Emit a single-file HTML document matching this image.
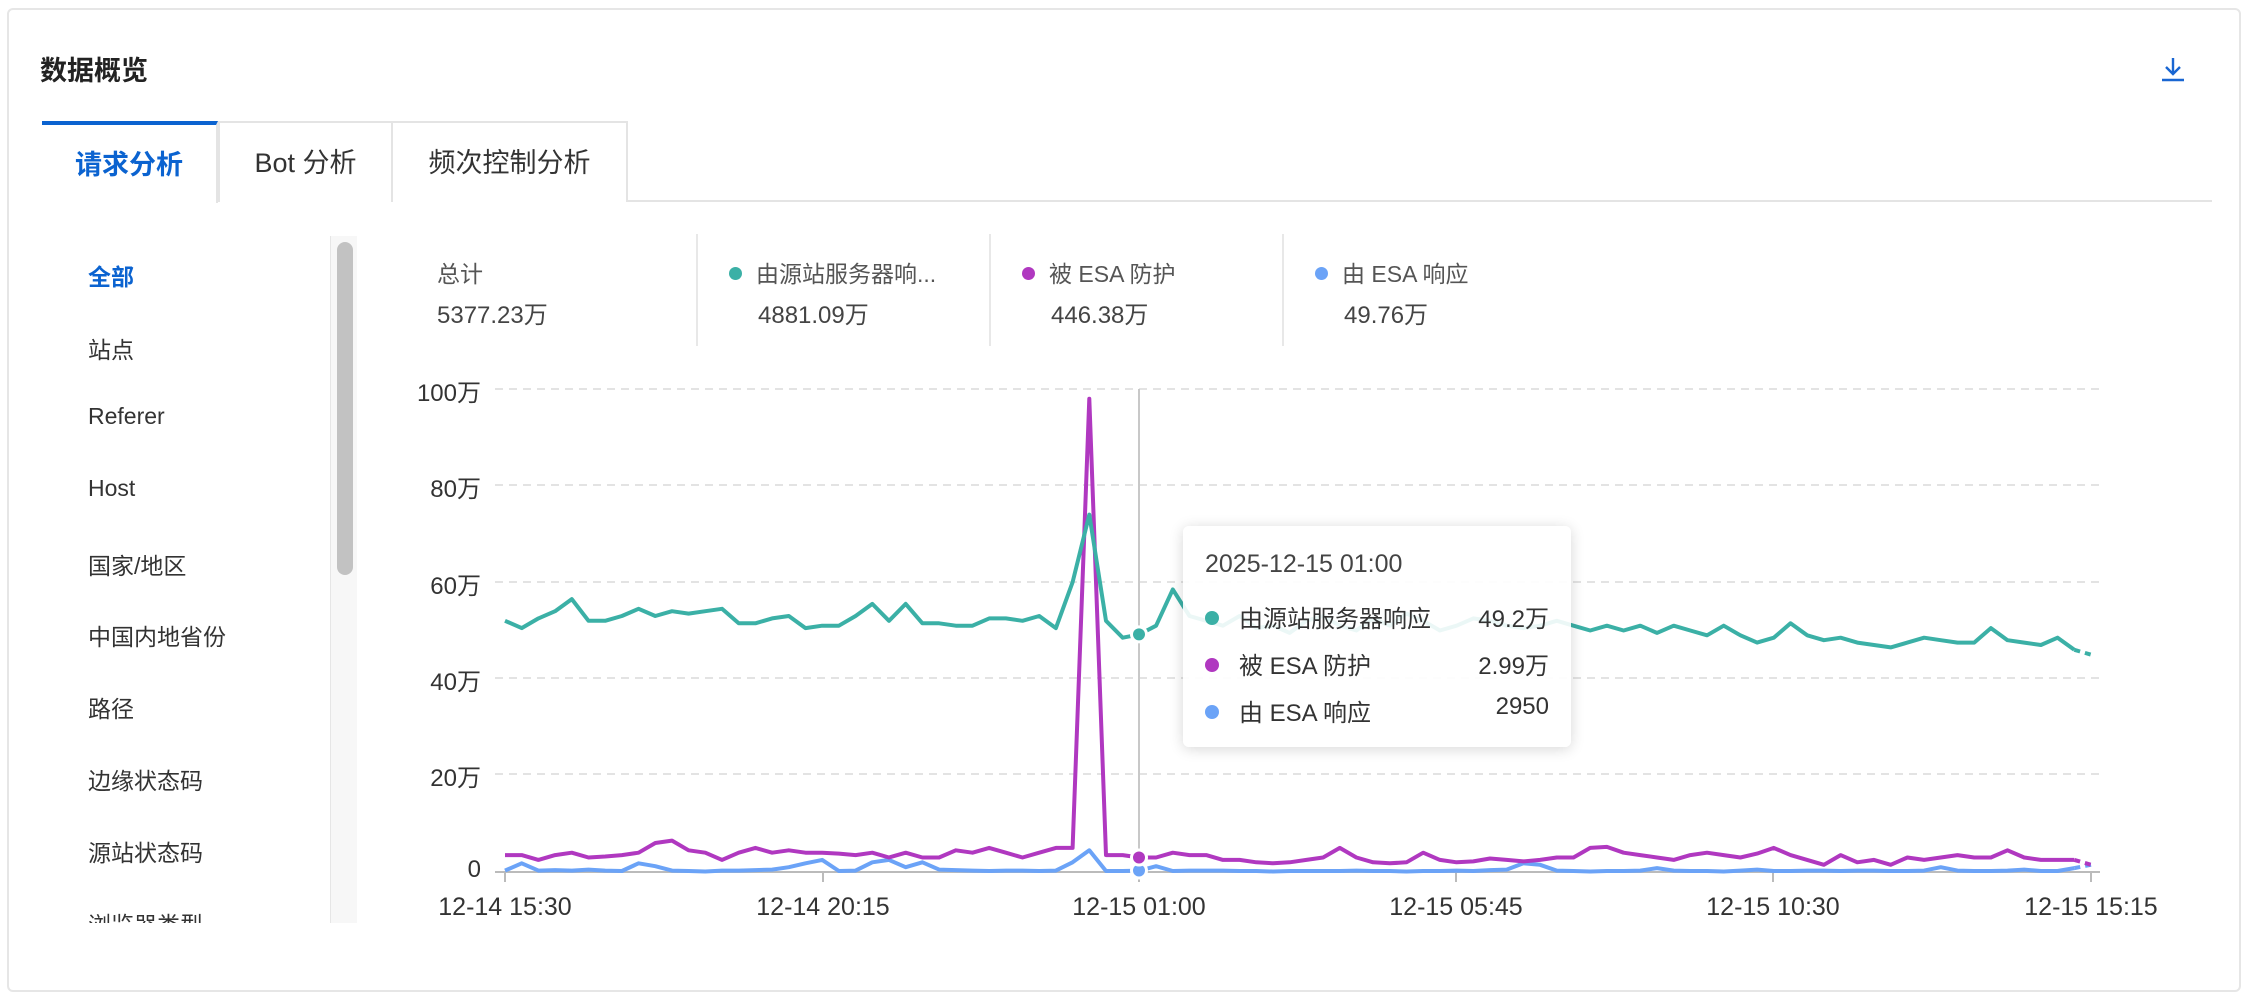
<!DOCTYPE html>
<html><head><meta charset="utf-8">
<style>
*{margin:0;padding:0;box-sizing:border-box}
body{width:2252px;height:1002px;background:#fff;font-family:"Liberation Sans","Noto Sans CJK SC",sans-serif;position:relative;overflow:hidden;color:#333}
.card{position:absolute;left:7px;top:8px;width:2234px;height:984px;border:2px solid #e6e6e6;border-radius:6px}
.abs{position:absolute;white-space:nowrap}
.title{left:40px;top:49px;font-size:27px;font-weight:bold;color:#222}
.tabline{position:absolute;left:42px;top:200px;width:2170px;height:2px;background:#e4e4e4}
.tab{position:absolute;top:121px;height:81px;border:2px solid #e4e4e4;border-bottom:none;background:#fff;font-size:27px;color:#333;display:flex;align-items:center;justify-content:center;padding-bottom:4px}
.tab.act{border-top:4px solid #0b63d0;border-left:none;color:#0b63d0;font-weight:bold;height:82px}
.menu{left:88px;font-size:23px;color:#333}
.lbl{font-size:23px;color:#555}
.val{font-size:24px;color:#444}
.sep{position:absolute;top:234px;width:2px;height:112px;background:#e8e8e8}
.dot{display:inline-block;width:13px;height:13px;border-radius:50%;margin-right:14px;vertical-align:2px}
.yl{font-size:24px;color:#333;text-align:right;width:100px;left:381px}
.xl{font-size:25px;color:#333;width:200px;text-align:center}
.tip{position:absolute;left:1183px;top:526px;width:388px;height:221px;background:rgba(255,255,255,0.9);border-radius:6px;box-shadow:0 2px 14px rgba(0,0,0,0.16)}
.tip .r{position:absolute;left:22px;font-size:24px;color:#333;width:344px}
.tip .r span.v{position:absolute;right:0}
</style></head><body>
<div class="card"></div>
<div class="abs title">数据概览</div>
<svg class="abs" style="left:2160px;top:56px" width="26" height="26" viewBox="0 0 26 26"><path d="M13 2v16M6 11l7 7 7-7M2 24h22" stroke="#1966d2" stroke-width="2.4" fill="none"/></svg>
<div class="tabline"></div>
<div class="tab act" style="left:42px;width:176px">请求分析</div>
<div class="tab" style="left:218px;width:175px">Bot 分析</div>
<div class="tab" style="left:391px;width:237px">频次控制分析</div>

<div class="abs menu" style="top:258px;color:#0b63d0;font-weight:bold">全部</div>
<div class="abs menu" style="top:331px">站点</div>
<div class="abs menu" style="top:403px">Referer</div>
<div class="abs menu" style="top:475px">Host</div>
<div class="abs menu" style="top:547px">国家/地区</div>
<div class="abs menu" style="top:618px">中国内地省份</div>
<div class="abs menu" style="top:690px">路径</div>
<div class="abs menu" style="top:762px">边缘状态码</div>
<div class="abs menu" style="top:834px">源站状态码</div>
<div style="position:absolute;left:88px;top:906px;height:17px;overflow:hidden;font-size:23px;color:#333">浏览器类型</div>
<div style="position:absolute;left:330px;top:236px;width:27px;height:687px;background:#f7f7f7;border-left:1px solid #e6e6e6"></div>
<div style="position:absolute;left:337px;top:242px;width:16px;height:333px;background:#c2c2c2;border-radius:8px"></div>

<div class="abs lbl" style="left:437px;top:255px">总计</div>
<div class="abs val" style="left:437px;top:295px">5377.23万</div>
<div class="sep" style="left:696px"></div>
<div class="abs lbl" style="left:729px;top:255px"><span class="dot" style="background:#3bb0a6"></span>由源站服务器响...</div>
<div class="abs val" style="left:758px;top:295px">4881.09万</div>
<div class="sep" style="left:989px"></div>
<div class="abs lbl" style="left:1022px;top:255px"><span class="dot" style="background:#b038c0"></span>被 ESA 防护</div>
<div class="abs val" style="left:1051px;top:295px">446.38万</div>
<div class="sep" style="left:1282px"></div>
<div class="abs lbl" style="left:1315px;top:255px"><span class="dot" style="background:#6ba3f7"></span>由 ESA 响应</div>
<div class="abs val" style="left:1344px;top:295px">49.76万</div>

<div class="abs yl" style="top:373px">100万</div>
<div class="abs yl" style="top:469px">80万</div>
<div class="abs yl" style="top:566px">60万</div>
<div class="abs yl" style="top:662px">40万</div>
<div class="abs yl" style="top:758px">20万</div>
<div class="abs yl" style="top:856px">0</div>
<div class="abs xl" style="left:405px;top:893px">12-14 15:30</div>
<div class="abs xl" style="left:723px;top:893px">12-14 20:15</div>
<div class="abs xl" style="left:1039px;top:893px">12-15 01:00</div>
<div class="abs xl" style="left:1356px;top:893px">12-15 05:45</div>
<div class="abs xl" style="left:1673px;top:893px">12-15 10:30</div>
<div class="abs xl" style="left:1991px;top:893px">12-15 15:15</div>

<svg id="ch" class="abs" style="left:0;top:0" width="2252" height="1002"></svg>

<div class="tip">
<div class="r" style="top:24px;color:#444;font-size:25px">2025-12-15 01:00</div>
<div class="r" style="top:73px"><span class="dot" style="background:#3bb0a6;width:14px;height:14px;margin-right:20px"></span>由源站服务器响应<span class="v">49.2万</span></div>
<div class="r" style="top:120px"><span class="dot" style="background:#b038c0;width:14px;height:14px;margin-right:20px"></span>被 ESA 防护<span class="v">2.99万</span></div>
<div class="r" style="top:167px"><span class="dot" style="background:#6ba3f7;width:14px;height:14px;margin-right:20px"></span>由 ESA 响应<span class="v">2950</span></div>
</div>

<script>
var g=[52,50.5,52.5,54,56.5,52,52,53,54.5,53,54,53.5,54,54.5,51.5,51.5,52.5,53,50.5,51,51,53,55.5,52,55.5,51.5,51.5,51,51,52.5,52.5,52,53,50.5,60,74,52,48.5,49.2,51,58.5,53,52,51,53,50.5,51,49.5,52,53,51,50,52.5,51,53.5,52,50,51,52.5,52,51,50.5,51,52,51,50,51,50,51,49.5,51,50,49,51,49,47.5,48.5,51.5,49,48,48.5,47.5,47,46.5,47.5,48.5,48,47.5,47.5,50.5,48,47.5,47,48.5,46,45,39.5];
var p=[3.5,3.5,2.5,3.5,4,3,3.2,3.5,4,6,6.5,4.5,4,2.5,4,5,4,4.5,4,4,3.8,3.5,4,3,4,3,3,4.5,4,5,4,3,4,5,5,98,3.5,3.5,3,3,4,3.5,3.5,2.5,2.5,2,1.8,2,2.5,3,5,3,2,1.8,2,4,2.5,2,2.2,2.8,2.5,2.2,2.5,3,3,5,5.2,4,3.5,3,2.5,3.5,4,3.5,3,3.8,5,3.5,2.5,1.5,3.5,2,2.5,1.5,3,2.5,3,3.5,3,3,4.5,3,2.5,2.5,2.5,1.5];
var b=[0.3,1.8,0.3,0.4,0.3,0.5,0.3,0.2,1.8,1.2,0.3,0.2,0.1,0.3,0.3,0.4,0.5,1,1.8,2.5,0.2,0.3,2,2.5,1,2,0.5,0.4,0.3,0.2,0.3,0.3,0.2,0.3,2,4.5,0.2,0.2,0.3,1.2,0.2,0.3,0.3,0.3,0.2,0.2,0.1,0.2,0.2,0.2,0.2,0.3,0.2,0.2,0.1,0.2,0.2,0.3,0.2,0.4,0.5,1.8,1.5,0.3,0.2,0.1,0.2,0.2,0.3,0.8,0.3,0.2,0.2,0.1,0.3,0.5,0.2,0.2,0.3,0.3,0.2,0.3,0.3,0.2,0.2,0.3,1,0.3,0.2,0.2,0.3,0.5,0.2,0.2,0.8,1.5];
function X(i){return 505+i*16.695}function Y(v){return 872-v*4.83}
var s='';
[389,485,582,678,774].forEach(function(y){s+='<line x1="495" x2="2100" y1="'+y+'" y2="'+y+'" stroke="#e3e3e3" stroke-width="2" stroke-dasharray="8,6"/>'});
s+='<line x1="495" x2="2100" y1="872" y2="872" stroke="#bbb" stroke-width="2"/>';
[505,823,1139,1456,1773,2091].forEach(function(x){s+='<line x1="'+x+'" x2="'+x+'" y1="872" y2="882" stroke="#bbb" stroke-width="2"/>'});
s+='<line x1="1139" x2="1139" y1="389" y2="872" stroke="#c8c8c8" stroke-width="2"/>';
function line(a,c){var pts=[];for(var i=0;i<95;i++)pts.push(X(i).toFixed(1)+','+Y(a[i]).toFixed(1));
s+='<polyline points="'+pts.join(' ')+'" fill="none" stroke="'+c+'" stroke-width="4" stroke-linejoin="round"/>';
s+='<line x1="'+X(94)+'" y1="'+Y(a[94])+'" x2="'+X(95)+'" y2="'+Y(a[95])+'" stroke="'+c+'" stroke-width="4" stroke-dasharray="6,5"/>';
s+='<circle cx="1139" cy="'+Y(a[38])+'" r="9" fill="#fff"/><circle cx="1139" cy="'+Y(a[38])+'" r="6" fill="'+c+'"/>';}
line(b,'#6ba3f7');line(p,'#b038c0');line(g,'#3bb0a6');
document.getElementById('ch').innerHTML=s;
</script>
</body></html>
